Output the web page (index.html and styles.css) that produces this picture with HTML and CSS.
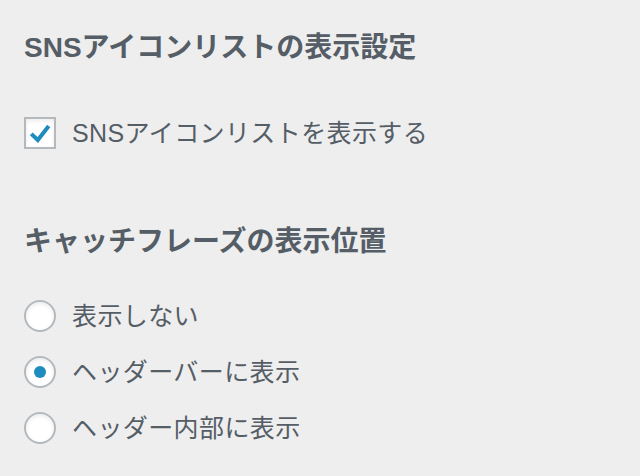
FILE: index.html
```html
<!DOCTYPE html>
<html lang="ja">
<head>
  <meta charset="UTF-8">
  <meta name="viewport" content="width=device-width, initial-scale=1.0">
  <title>テーマカスタマイザー</title>
  <link rel="stylesheet" href="styles.css">
</head>
<body>
  <div class="panel">
    <div class="control">
      <h3 class="control-title">SNSアイコンリストの表示設定</h3>
      <label class="option option-first">
        <span class="checkbox is-checked">
          <svg viewBox="0 0 32 32" width="28" height="28">
            <path d="M6 17 L13.5 24 L26 8" fill="none" stroke="#1e8cbe" stroke-width="4.6" stroke-linecap="butt" stroke-linejoin="miter"/>
          </svg>
        </span>
        <span class="option-text">SNSアイコンリストを表示する</span>
      </label>
    </div>

    <div class="control control-radio">
      <h3 class="control-title">キャッチフレーズの表示位置</h3>
      <div class="radio-list">
        <label class="option">
          <span class="radio"></span>
          <span class="option-text">表示しない</span>
        </label>
        <label class="option">
          <span class="radio is-checked"></span>
          <span class="option-text">ヘッダーバーに表示</span>
        </label>
        <label class="option">
          <span class="radio"></span>
          <span class="option-text">ヘッダー内部に表示</span>
        </label>
      </div>
    </div>
  </div>
</body>
</html>
```

FILE: styles.css
```css
:root {
  --bg: #eeeeee;
  --text: #555d66;
  --field-border: #b4b9be;
  --accent: #1e8cbe;
}
* { box-sizing: border-box; }
body {
  margin: 0;
  background: var(--bg);
  font-family: "Liberation Sans", "Noto Sans CJK JP", sans-serif;
  color: var(--text);
}
.panel {
  padding: 28px 24px 0;
  display: flex;
  flex-direction: column;
  gap: 73px;
}
.control-title {
  margin: 0;
  font-size: 28px;
  font-weight: 700;
  line-height: 40px;
}
.option {
  display: flex;
  align-items: center;
  gap: 16px;
  height: 32px;
}
.option-first {
  margin-top: 49px;
}
.option-text {
  font-size: 25px;
  letter-spacing: 0.4px;
  line-height: 32px;
}
.checkbox,
.radio {
  flex: none;
  width: 32px;
  height: 32px;
  border: 2px solid var(--field-border);
  background: #fff;
  box-shadow: inset 0 2px 4px rgba(0,0,0,0.08);
  display: flex;
  align-items: center;
  justify-content: center;
}
.radio {
  border-radius: 50%;
}
.radio.is-checked::before {
  content: "";
  width: 12px;
  height: 12px;
  border-radius: 50%;
  background: var(--accent);
}
.radio-list {
  margin-top: 38px;
  display: flex;
  flex-direction: column;
  gap: 24px;
}
```
